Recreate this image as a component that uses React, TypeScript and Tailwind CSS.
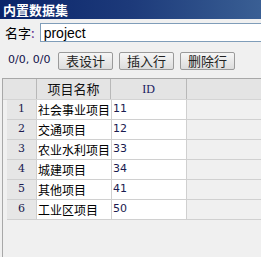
import React from 'react';

const rows = [
  { name: '社会事业项目', id: '11' },
  { name: '交通项目', id: '12' },
  { name: '农业水利项目', id: '33' },
  { name: '城建项目', id: '34' },
  { name: '其他项目', id: '41' },
  { name: '工业区项目', id: '50' },
];

const cjk = { fontFamily: '"Noto Sans CJK SC", sans-serif' };

export default function App() {
  return (
    <div className="w-[261px] h-[257px] overflow-hidden bg-[#f0f0f0] flex flex-col" style={cjk}>
      {/* Title bar */}
      <div className="h-[19px] shrink-0 bg-gradient-to-r from-[#0a246a] via-[#1d3a7a] to-[#3a5f94] flex items-center pl-[3px]">
        <span className="text-white font-bold text-[13px] leading-none">内置数据集</span>
      </div>

      {/* Name row */}
      <div className="flex items-center h-[25px] mt-[1px] pl-[5px]">
        <span className="text-[13px] text-black leading-none">名字</span>
        <span className="text-[13px] text-[#5a2a8a] leading-none">:</span>
        <div className="ml-[5px] flex-1 h-[19px] bg-white border border-[#7f9db9] border-r-0 flex items-center pl-[3px]">
          <span className="text-[14px] leading-none text-black" style={{ fontFamily: '"Liberation Sans", sans-serif' }}>project</span>
        </div>
      </div>

      {/* Toolbar */}
      <div className="flex items-center h-[25px] mt-[3px] pl-[8px]">
        <span className="text-[11px] text-[#10104a] w-[50px]" style={{ fontFamily: '"DejaVu Sans", sans-serif' }}>0/0, 0/0</span>
        <div className="flex gap-[6px]">
          {['表设计', '插入行', '删除行'].map((label) => (
            <button
              key={label}
              className="w-[55px] h-[18px] border border-[#9a9a9a] rounded-[2px] bg-gradient-to-b from-[#f6f6f6] to-[#dcdcdc] text-[13px] leading-none text-[#222] flex items-center justify-center"
            >
              {label}
            </button>
          ))}
        </div>
      </div>

      {/* Table area */}
      <div className="flex-1 mt-[5px] ml-[2px] border-l border-t border-[#a8a8a8] flex flex-col">
        <div className="flex h-[21px] bg-[#e4e4e4] border-b border-[#d4d4d4]">
          <div className="w-[34px] border-r border-[#b8b8b8]" />
          <div className="w-[74px] border-r border-[#b8b8b8] flex items-center justify-center text-[13px] text-[#111]">项目名称</div>
          <div className="w-[76px] border-r border-[#b8b8b8] flex items-center justify-center text-[12px] text-[#1a1a60]" style={{ fontFamily: '"Liberation Serif", serif' }}>ID</div>
        </div>
        <div className="flex flex-col pl-[4px]">
          {rows.map((r, i) => (
            <div key={i} className="flex h-[20px] border-b border-[#d0d0d0]">
              <div className="w-[30px] bg-[#e6e6e6] border-r border-[#d0d0d0] flex items-center justify-center text-[11px] text-[#1a1a50]" style={{ fontFamily: '"DejaVu Serif", serif' }}>{i + 1}</div>
              <div className="w-[75px] bg-white border-r border-[#d0d0d0] flex items-center pl-[1px] text-[12px] text-black whitespace-nowrap overflow-hidden">{r.name}</div>
              <div className="w-[75px] bg-white border-r border-[#d0d0d0] flex items-center pl-[1px] text-[11px] text-[#1a1a50]" style={{ fontFamily: '"DejaVu Sans", sans-serif' }}>{r.id}</div>
            </div>
          ))}
        </div>
      </div>
    </div>
  );
}
